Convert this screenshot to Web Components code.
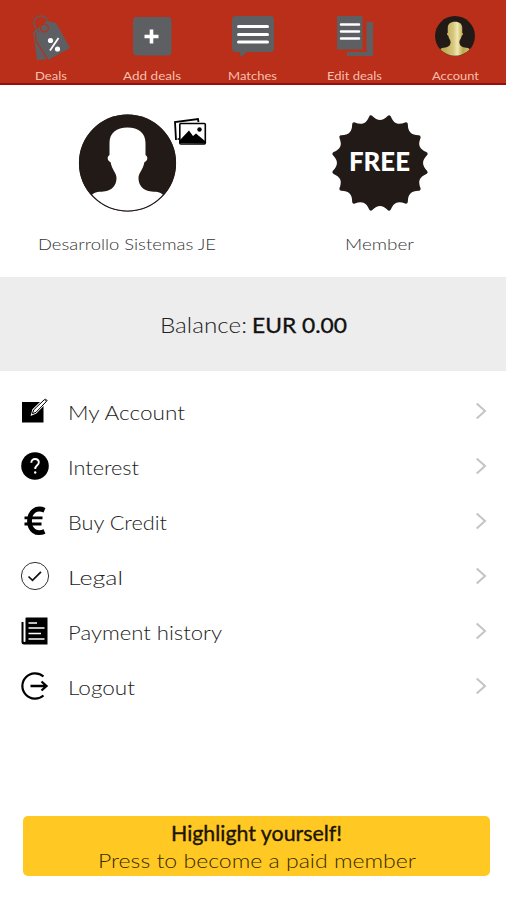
<!DOCTYPE html>
<html lang="en">
<head>
<meta charset="utf-8">
<title>Account</title>
<style>
html,body{margin:0;background:#fff}
body{font-family:Lato,"Liberation Sans",sans-serif;color:#333}
</style>
</head>
<body>
<account-page></account-page>
<script>
const define = (name, html, setup) => customElements.define(name, class extends HTMLElement {
  connectedCallback() {
    if (this.shadowRoot) return;
    const root = this.attachShadow({ mode: 'open' });
    root.innerHTML = typeof html === 'function' ? html(this) : html;
    if (setup) setup(this, root);
  }
});

/* A line of text whose letters are widened to take a given width. */
define('fit-text', `<style>
  :host{display:block;white-space:pre;flex:none}
  span{display:inline-block;transform-origin:0 50%}
</style><span><slot></slot></span>`, (el, root) => {
  const span = root.querySelector('span');
  const target = +el.getAttribute('width');
  el.style.width = target + 'px';
  span.style.transform = `scaleX(${target / span.getBoundingClientRect().width})`;
});

const person = 'M-37 33.500C-34 29 -30 29 -24 28.500C-15 27.500 -11 22 -11 15C-11 10 -15.500 7 -17 -1C-20 -2 -21 -6 -18 -8V-20C-18 -30 -11 -35.500 0 -35.500S18 -30 18 -20V-8C21 -6 20 -2 17 -1C15.500 7 11 10 11 15C11 22 15 27.500 24 28.500C30 29 34 29 37 33.500L50 50H-50Z';
const icons = {
  deals: [40,46,`<circle cx="10" cy="10" r="7" fill="none" stroke="#66595b" stroke-width="1.6"/>
    <path d="M2 19L6 16L19 46L6 47Z" fill="#5e5f62"/>
    <path d="M8 14L16 8L25 10L39 35L17 47L8 25Z" fill="#5e5f62"/>
    <path d="M4.500 19L5 28L17 47" fill="none" stroke="#b92f19" stroke-width="1.2"/>
    <circle cx="13.500" cy="15" r="3.900" fill="#5e5f62" stroke="#b92f19" stroke-width="1.3"/>
    <path d="M27.500 25L19 37.500" stroke="#fff" stroke-width="1.800"/><circle cx="19.500" cy="27.500" r="2.600" fill="#fff"/><circle cx="26.500" cy="36" r="2.600" fill="#fff"/>`],
  add: [40,40,`<rect x="1" y="1" width="38.500" height="38.500" rx="4" fill="#5e5f62"/><path d="M19.500 13.500V27.500M12.500 20.500H26.500" stroke="#fff" stroke-width="3.600"/>`],
  matches: [42,42,`<path d="M4 1H38Q42 1 42 5V33Q42 37 38 37H15L9 42L7.500 37H4Q0 37 0 33V5Q0 1 4 1Z" fill="#5e5f62"/><path d="M6.500 11.500H35.500M6.500 19.500H35.500M6.500 27H35.500" stroke="#fff" stroke-width="3" stroke-linecap="round"/>`],
  edit: [34,42,`<path d="M0 1H25.500V34.500H0ZM29.500 7H36V41H10V37H29.500Z" fill="#5e5f62"/><path d="M4 9.500H22M4 16.500H22M4 23.500H22" stroke="#fff" stroke-width="2.500" stroke-linecap="round"/>`],
  gold: [40,40,`<defs><linearGradient id="g"><stop offset=".2" stop-color="#bda955"/><stop offset=".45" stop-color="#d5c57b"/><stop offset=".56" stop-color="#f0e8b2"/><stop offset=".7" stop-color="#bda64d"/><stop offset="1" stop-color="#e0d491"/></linearGradient><clipPath id="c"><circle r="49"/></clipPath></defs><g transform="translate(20 20) scale(.403)"><circle r="49.500" fill="#211a17"/><g clip-path="url(#c)"><path d="${person}" fill="url(#g)"/></g></g>`],
  person: [98,98,`<defs><clipPath id="c"><circle r="48"/></clipPath></defs><g transform="translate(49.500 49)"><circle r="48.500" fill="#211a17"/><g clip-path="url(#c)"><path d="${person}" fill="#fff"/></g><circle r="48" fill="none" stroke="#211a17" stroke-width="1.200"/></g>`],
  photos: [34,30,`<path d="M2 22L1 4L24 1L24.500 4" fill="none" stroke="#000" stroke-width="1.800"/><path d="M3.500 21L5 21" stroke="#000" stroke-width="1.500"/><rect x="5.800" y="5.500" width="25.500" height="20.500" rx="1" fill="#fff" stroke="#000" stroke-width="1.600"/><path d="M6 25V22L15 12.500L19 18L22 15.500L31 23V25.500Z"/><circle cx="25.500" cy="11.500" r="2.200"/>`],
  account: [30,30,`<path d="M2 6H23.500V26.500H2Z"/><path d="M11.500 19L13 13.500L25 2L28 4.500L16 17Z" fill="#fff" stroke="#fff" stroke-width="1.200"/><path d="M12.300 17.800L13.800 13.800L25 3L27 4.800L16 16.300Z" fill="#fff" stroke="#000" stroke-width="1"/><path d="M24 3.800L25.500 2.500L27.800 4.500L26.300 6Z" fill="#555"/>`],
  interest: [30,30,`<circle cx="15" cy="15" r="13.800"/><path d="M11.300 11.800C11.300 6.500 18.800 7 18.800 11.500C18.800 14.500 15.200 14 15.200 18" fill="none" stroke="#fff" stroke-width="1.900"/><circle cx="15.200" cy="21.500" r="1.200" fill="#fff"/>`],
  euro: [30,30,`<path d="M24.500 4.200C16 .6 9.500 6 9.500 15S16 29 24.500 25.500" fill="none" stroke="#000" stroke-width="4.800"/><path d="M4.500 11.800H22.500M4.500 18H21.500" stroke="#000" stroke-width="2.800"/>`],
  legal: [30,30,`<circle cx="15" cy="15" r="13.600" fill="none" stroke="#333" stroke-width="1"/><path d="M8.500 15.500L12.500 19.300L21 10.800" fill="none" stroke="#111" stroke-width="1.700"/>`],
  history: [30,30,`<path d="M6 1.500H27.500V28.500H4Q1.500 28.500 1.500 26V6H3.500V25Q3.500 26 4.500 26Q5.500 26 5.500 25V2Z"/><path d="M8.500 7H17M8.500 12H24.500M8.500 17.500H21M8.500 23H24.500" stroke="#fff" stroke-width="1.700"/>`],
  logout: [30,30,`<path d="M23.500 5.500A12.700 12.700 0 1 0 23.500 24.500" fill="none" stroke="#000" stroke-width="2.200"/><path d="M10.500 15H26M21.500 10.500L26.500 15L21.500 19.500" fill="none" stroke="#000" stroke-width="2.300"/>`],
  chevron: [12,18,`<path d="M1.700 1.500L10 9L1.700 16.500" fill="none" stroke="#c4c4c4" stroke-width="2"/>`]
};

define('ui-icon', el => {
  const [w, h, art] = icons[el.getAttribute('name')];
  return `<style>:host{display:block;flex:none}svg{display:block;overflow:visible}</style><svg width="${w}" height="${h}" viewBox="0 0 ${w} ${h}">${art}</svg>`;
});

define('free-badge', () => {
  const at = (r, deg) => { const t = deg * Math.PI / 180; return (50 + r * Math.sin(t)).toFixed(2) + ' ' + (50 - r * Math.cos(t)).toFixed(2); };
  let d = 'M' + at(46.5, 11.25);
  for (let i = 1; i <= 16; i++) d += 'Q' + at(36.5, i * 22.5) + ' ' + at(46.5, 11.25 + i * 22.5);
  return `<style>:host{display:block}svg{display:block}</style><svg width="100" height="100" viewBox="0 0 100 100"><path d="${d}Z" fill="#211a17" stroke="#211a17" stroke-width="4" stroke-linejoin="round"/><text x="19" y="58.300" font-size="26" font-weight="900" fill="#fff" textLength="61" lengthAdjust="spacingAndGlyphs">FREE</text></svg>`;
});

define('nav-tab', el => `<style>
  :host{display:flex;flex-direction:column;align-items:center;color:#f9bfae;font-size:11.5px;line-height:14px}
  .icon{height:56px;margin-top:8px;display:flex;align-items:center;justify-content:center}
  fit-text{margin-top:4.5px}
</style><div class="icon"><ui-icon name="${el.getAttribute('icon')}"></ui-icon></div><fit-text width="${el.getAttribute('width')}">${el.getAttribute('label')}</fit-text>`);

define('top-bar', `<style>
  :host{display:grid;grid-template-columns:repeat(5,1fr);height:85px;box-sizing:border-box;background:#b92f19;border-bottom:2px solid #970f0b}
</style><slot></slot>`);

define('profile-card', `<style>
  :host{display:flex;flex-direction:column;align-items:center;padding-top:28px;font-size:16.5px;line-height:20px;font-weight:300;color:#333}
  .art{height:100px;position:relative;display:flex;align-items:center}
  ::slotted([slot=corner]){position:absolute;left:96px;top:5px}
  .name{margin-top:20.5px}
</style><div class="art"><slot name="art"></slot><slot name="corner"></slot></div><div class="name"><slot></slot></div>`);

define('balance-strip', `<style>
  :host{display:flex;align-items:center;justify-content:center;gap:5px;height:94px;background:#ededed;font-size:22px;line-height:26px;box-sizing:border-box;padding-top:2px}
</style><slot></slot>`);

define('menu-row', el => `<style>
  :host{display:flex;align-items:center;height:55px;padding:0 19px 0 20px;font-size:20px;line-height:24px;font-weight:300;color:#222}
  ui-icon{margin-top:-3px}
  fit-text{margin:-2px 0 0 17.5px}
  .end{margin-left:auto}
</style><ui-icon name="${el.getAttribute('icon')}"></ui-icon><fit-text width="${el.getAttribute('width')}">${el.getAttribute('label')}</fit-text><ui-icon class="end" name="chevron"></ui-icon>`);

define('promo-button', `<style>
  :host{display:flex;flex-direction:column;align-items:center;box-sizing:border-box;height:60px;margin:0 16px 0 23px;padding-top:4px;border-radius:5px;background:#ffc822;font-size:20.5px;line-height:27px}
</style><slot></slot>`);

define('account-page', `<style>
  :host{display:flex;flex-direction:column;width:506px;height:900px;overflow:hidden;background:#fff}
  .profile{display:grid;grid-template-columns:1fr 1fr;height:192px}
  .menu{padding-top:14px;flex:1}
  promo-button{margin-bottom:24px}
  .strong{font-weight:400;-webkit-text-stroke:.35px}
  .light{font-weight:300}
</style>
<top-bar>
  <nav-tab icon="deals" label="Deals" width="32"></nav-tab>
  <nav-tab icon="add" label="Add deals" width="58"></nav-tab>
  <nav-tab icon="matches" label="Matches" width="49"></nav-tab>
  <nav-tab icon="edit" label="Edit deals" width="55"></nav-tab>
  <nav-tab icon="gold" label="Account" width="47"></nav-tab>
</top-bar>
<div class="profile">
  <profile-card><ui-icon slot="art" name="person"></ui-icon><ui-icon slot="corner" name="photos"></ui-icon><fit-text width="178">Desarrollo Sistemas JE</fit-text></profile-card>
  <profile-card><free-badge slot="art"></free-badge><fit-text width="69">Member</fit-text></profile-card>
</div>
<balance-strip><fit-text class="light" width="87" style="color:#222">Balance:</fit-text><fit-text class="strong" width="95" style="color:#111">EUR 0.00</fit-text></balance-strip>
<div class="menu">
  <menu-row icon="account" label="My Account" width="117"></menu-row>
  <menu-row icon="interest" label="Interest" width="71"></menu-row>
  <menu-row icon="euro" label="Buy Credit" width="99"></menu-row>
  <menu-row icon="legal" label="Legal" width="55"></menu-row>
  <menu-row icon="history" label="Payment history" width="154"></menu-row>
  <menu-row icon="logout" label="Logout" width="67"></menu-row>
</div>
<promo-button><fit-text class="strong" width="171" style="color:#1b1400">Highlight yourself!</fit-text><fit-text class="light" width="318" style="color:#392b00">Press to become a paid member</fit-text></promo-button>`);
</script>
</body>
</html>
